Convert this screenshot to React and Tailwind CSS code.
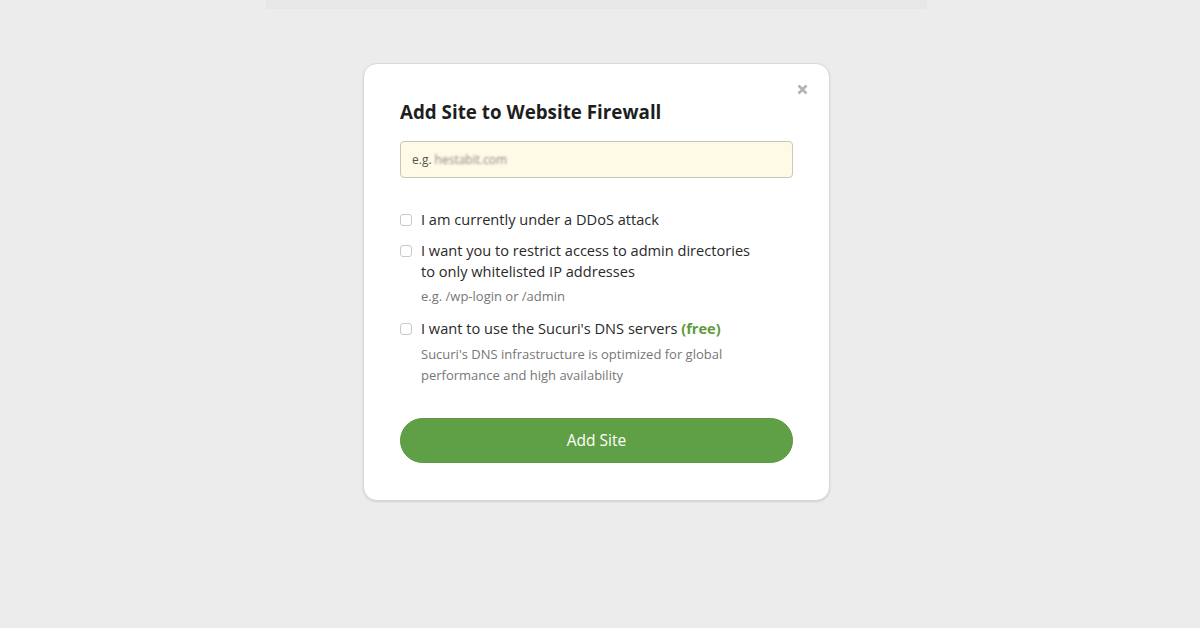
import React from "react";

function Box() {
  return (
    <span className="mt-[5px] h-[12px] w-[12px] shrink-0 rounded-[3px] border border-[#c9c9c9] bg-white" />
  );
}

export default function App() {
  return (
    <div
      className="min-h-[628px] w-full bg-[#ececec] pr-[7px]"
      style={{ fontFamily: '"Open Sans", "Noto Sans", sans-serif' }}
    >
      <div className="mx-auto h-[9px] w-[661px] bg-[#e7e7e7]" />
      <div className="relative mx-auto mt-[54px] w-[467px] rounded-[14px] border border-[#d9d9d9] bg-white px-[36px] pb-[37px] pt-[34px] shadow-[0_1px_2px_rgba(0,0,0,0.12)]">
        <svg
          className="absolute right-[21px] top-[20px]"
          width="11"
          height="11"
          viewBox="0 0 11 11"
        >
          <path d="M1.5 1.5 L9.5 9.5 M9.5 1.5 L1.5 9.5" stroke="#b3b3b3" strokeWidth="2.6" strokeLinecap="butt" />
        </svg>
        <h1 className="text-[18.8px] font-bold leading-[28px] text-[#1e1e1e]">
          Add Site to Website Firewall
        </h1>
        <div className="mt-[15px] flex h-[37px] w-[393px] items-center rounded-[4px] border border-[#c7c7bd] bg-[#fefae6] px-[11px] text-[12px] text-[#555]">
          <span>e.g.</span>
          <span className="ml-[3px] text-[#8a8a8a] blur-[1.2px]">hestabit.com</span>
        </div>

        <div className="mt-[31px] flex gap-[9px]">
          <Box />
          <span className="text-[14.6px] leading-[21px] text-[#2a2a2a]">
            I am currently under a DDoS attack
          </span>
        </div>

        <div className="mt-[10px] flex gap-[9px]">
          <Box />
          <div>
            <div className="w-[340px] text-[14.6px] leading-[21px] text-[#2a2a2a]">
              I want you to restrict access to admin directories to only whitelisted IP addresses
            </div>
            <div className="mt-[4px] text-[13px] leading-[21px] text-[#777]">
              e.g. /wp-login or /admin
            </div>
          </div>
        </div>

        <div className="mt-[11px] flex gap-[9px]">
          <Box />
          <div>
            <div className="text-[14.6px] leading-[21px] text-[#2a2a2a]">
              I want to use the Sucuri's DNS servers{" "}
              <span className="font-bold text-[#5c9a3c]">(free)</span>
            </div>
            <div className="mt-[5px] w-[320px] text-[13px] leading-[21px] text-[#777]">
              Sucuri's DNS infrastructure is optimized for global performance and high availability
            </div>
          </div>
        </div>

        <button className="mt-[32px] flex h-[45px] w-[393px] items-center justify-center rounded-full border border-[#5a9842] bg-[#5f9f45] text-[15.5px] text-white">
          Add Site
        </button>
      </div>
    </div>
  );
}
